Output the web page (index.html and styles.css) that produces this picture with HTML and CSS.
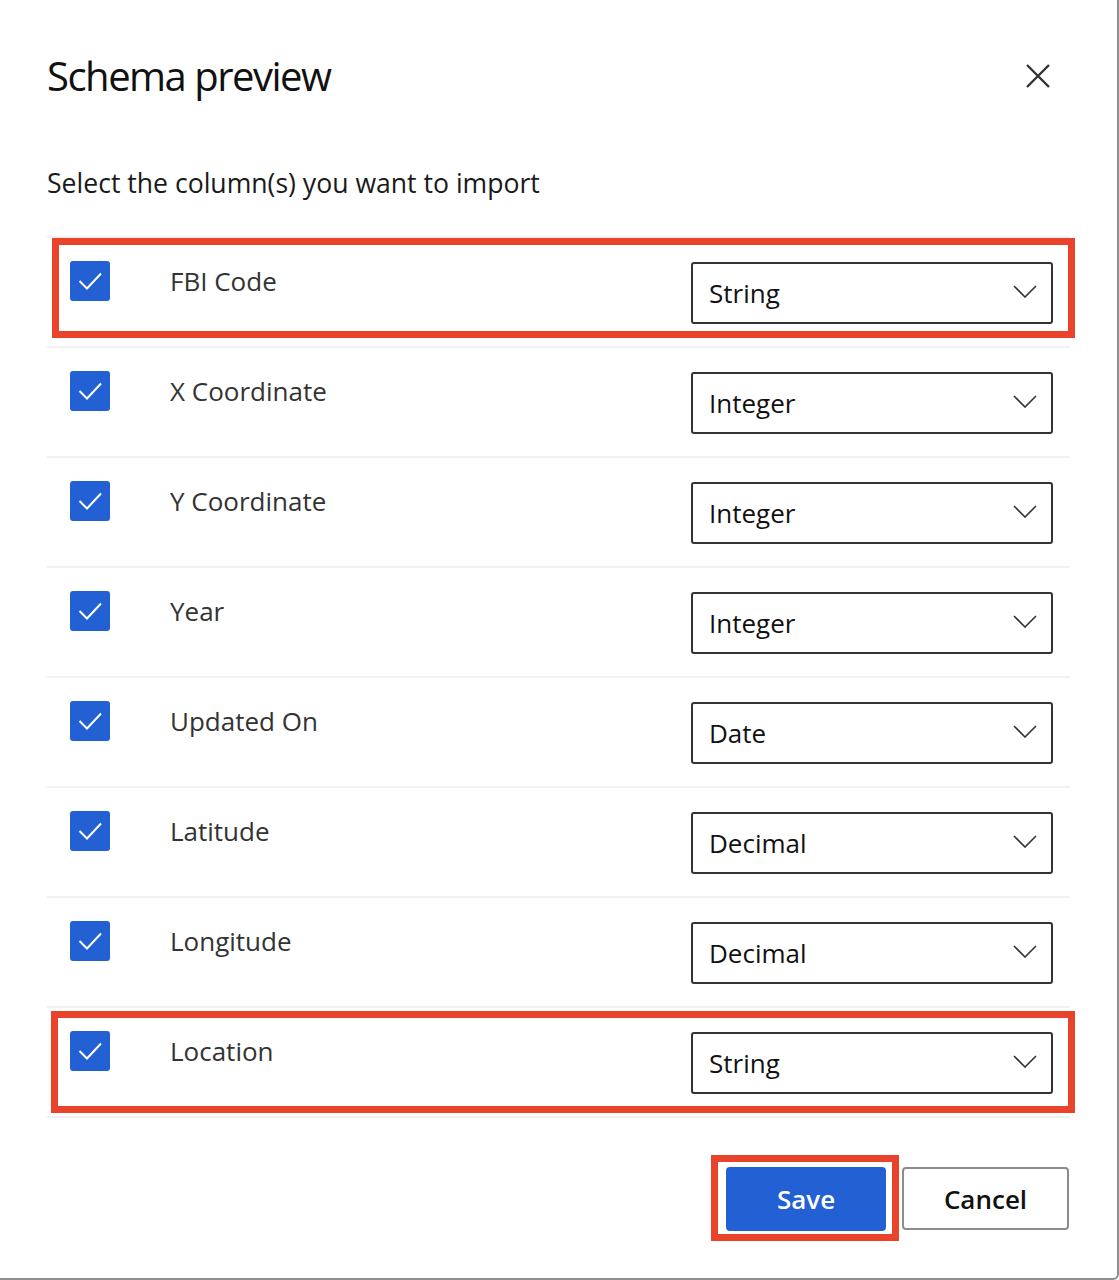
FILE: index.html
```html
<!DOCTYPE html>
<html lang="en">
<head>
<meta charset="utf-8">
<title>Schema preview</title>
<link rel="stylesheet" href="styles.css">
</head>
<body>
<div class="dialog">
  <div class="header">
    <h1 class="title">Schema preview</h1>
    <button class="close" aria-label="Close">
      <svg width="24" height="24" viewBox="0 0 24 24"><path d="M1 1 L23 23 M23 1 L1 23" stroke="#333" stroke-width="2.4" fill="none"/></svg>
    </button>
  </div>
  <p class="subtitle">Select the column(s) you want to import</p>
  <div class="list">
    <div class="row">
      <span class="check"><svg width="40" height="40" viewBox="0 0 40 40"><path d="M9.5 20 L17 27.5 L31 12.5" stroke="#fff" stroke-width="2" fill="none"/></svg></span>
      <span class="label">FBI Code</span>
      <div class="select"><span>String</span><svg width="24" height="13" viewBox="0 0 24 13"><path d="M1 1 L12 12 L23 1" stroke="#333" stroke-width="1.6" fill="none"/></svg></div>
    </div>
    <div class="row">
      <span class="check"><svg width="40" height="40" viewBox="0 0 40 40"><path d="M9.5 20 L17 27.5 L31 12.5" stroke="#fff" stroke-width="2" fill="none"/></svg></span>
      <span class="label">X Coordinate</span>
      <div class="select"><span>Integer</span><svg width="24" height="13" viewBox="0 0 24 13"><path d="M1 1 L12 12 L23 1" stroke="#333" stroke-width="1.6" fill="none"/></svg></div>
    </div>
    <div class="row">
      <span class="check"><svg width="40" height="40" viewBox="0 0 40 40"><path d="M9.5 20 L17 27.5 L31 12.5" stroke="#fff" stroke-width="2" fill="none"/></svg></span>
      <span class="label">Y Coordinate</span>
      <div class="select"><span>Integer</span><svg width="24" height="13" viewBox="0 0 24 13"><path d="M1 1 L12 12 L23 1" stroke="#333" stroke-width="1.6" fill="none"/></svg></div>
    </div>
    <div class="row">
      <span class="check"><svg width="40" height="40" viewBox="0 0 40 40"><path d="M9.5 20 L17 27.5 L31 12.5" stroke="#fff" stroke-width="2" fill="none"/></svg></span>
      <span class="label">Year</span>
      <div class="select"><span>Integer</span><svg width="24" height="13" viewBox="0 0 24 13"><path d="M1 1 L12 12 L23 1" stroke="#333" stroke-width="1.6" fill="none"/></svg></div>
    </div>
    <div class="row">
      <span class="check"><svg width="40" height="40" viewBox="0 0 40 40"><path d="M9.5 20 L17 27.5 L31 12.5" stroke="#fff" stroke-width="2" fill="none"/></svg></span>
      <span class="label">Updated On</span>
      <div class="select"><span>Date</span><svg width="24" height="13" viewBox="0 0 24 13"><path d="M1 1 L12 12 L23 1" stroke="#333" stroke-width="1.6" fill="none"/></svg></div>
    </div>
    <div class="row">
      <span class="check"><svg width="40" height="40" viewBox="0 0 40 40"><path d="M9.5 20 L17 27.5 L31 12.5" stroke="#fff" stroke-width="2" fill="none"/></svg></span>
      <span class="label">Latitude</span>
      <div class="select"><span>Decimal</span><svg width="24" height="13" viewBox="0 0 24 13"><path d="M1 1 L12 12 L23 1" stroke="#333" stroke-width="1.6" fill="none"/></svg></div>
    </div>
    <div class="row">
      <span class="check"><svg width="40" height="40" viewBox="0 0 40 40"><path d="M9.5 20 L17 27.5 L31 12.5" stroke="#fff" stroke-width="2" fill="none"/></svg></span>
      <span class="label">Longitude</span>
      <div class="select"><span>Decimal</span><svg width="24" height="13" viewBox="0 0 24 13"><path d="M1 1 L12 12 L23 1" stroke="#333" stroke-width="1.6" fill="none"/></svg></div>
    </div>
    <div class="row">
      <span class="check"><svg width="40" height="40" viewBox="0 0 40 40"><path d="M9.5 20 L17 27.5 L31 12.5" stroke="#fff" stroke-width="2" fill="none"/></svg></span>
      <span class="label">Location</span>
      <div class="select"><span>String</span><svg width="24" height="13" viewBox="0 0 24 13"><path d="M1 1 L12 12 L23 1" stroke="#333" stroke-width="1.6" fill="none"/></svg></div>
    </div>
  </div>
  <div class="footer">
    <button class="btn btn-primary">Save</button>
    <button class="btn btn-default">Cancel</button>
  </div>
  <div class="mark mark-row1"></div>
  <div class="mark mark-row8"></div>
  <div class="mark mark-save"></div>
</div>
</body>
</html>
```
FILE: styles.css
```css
* { box-sizing: border-box; }
html, body { margin: 0; padding: 0; background: #fff; }
body { font-family: "Open Sans", "Noto Sans", "Liberation Sans", sans-serif; color: #111; }

.dialog {
  position: relative;
  width: 1119px;
  height: 1280px;
  padding: 51px 47px 0 47px;
  border-right: 2px solid #8e8e8e;
  border-bottom: 2px solid #8e8e8e;
  border-bottom-right-radius: 6px;
  background: #fff;
}

.header {
  display: flex;
  justify-content: space-between;
  align-items: center;
  padding-right: 20px;
}
.title {
  margin: 0;
  font-size: 40px;
  font-weight: 400;
  line-height: 50px;
  color: #111;
  letter-spacing: -1.5px;
}
.close {
  width: 24px; height: 24px; padding: 0; margin: 0;
  border: 0; background: none; display: block;
}
.close svg { display: block; }

.subtitle {
  margin: 64px 0 0 0;
  font-size: 26.6px;
  line-height: 36px;
  color: #1a1a1a;
}

.list {
  margin-top: 35px;
  border-top: 2px solid #f1f1f1;
}
.row {
  display: flex;
  align-items: flex-start;
  height: 110px;
  padding: 23px 17px 0 23px;
  border-bottom: 2px solid #f1f1f1;
}
.check {
  width: 40px; height: 40px;
  border-radius: 3px;
  background: #2360d4;
  flex: none;
}
.check svg { display: block; }
.label {
  margin-left: 60px;
  font-size: 26px;
  line-height: 40px;
  color: #333;
  flex: 1;
}
.select {
  margin-top: 1px;
  width: 362px;
  height: 62px;
  border: 2px solid #333;
  border-radius: 3px;
  display: flex;
  align-items: center;
  justify-content: space-between;
  padding: 0 14px 0 16px;
  font-size: 26px;
  color: #111;
}
.select svg { display: block; margin-top: -4px; }

.footer {
  display: flex;
  justify-content: flex-end;
  gap: 16px;
  margin-top: 49px;
  padding-right: 1px;
}
.btn {
  height: 64px;
  border-radius: 4px;
  font-family: inherit;
  font-size: 26px;
  font-weight: 600;
  padding: 0;
}
.btn-primary {
  width: 160px;
  background: #2360d4;
  border: 0;
  color: #fff;
}
.btn-default {
  width: 167px;
  height: 63px;
  background: #fff;
  border: 2px solid #8c8c8c;
  color: #111;
}

.mark {
  position: absolute;
  border: 7px solid #e9432b;
  pointer-events: none;
}
.mark-row1 { left: 52px; top: 238px; width: 1023px; height: 100px; }
.mark-row8 { left: 51px; top: 1011px; width: 1024px; height: 102px; }
.mark-save { left: 711px; top: 1155px; width: 188px; height: 86px; }
```
